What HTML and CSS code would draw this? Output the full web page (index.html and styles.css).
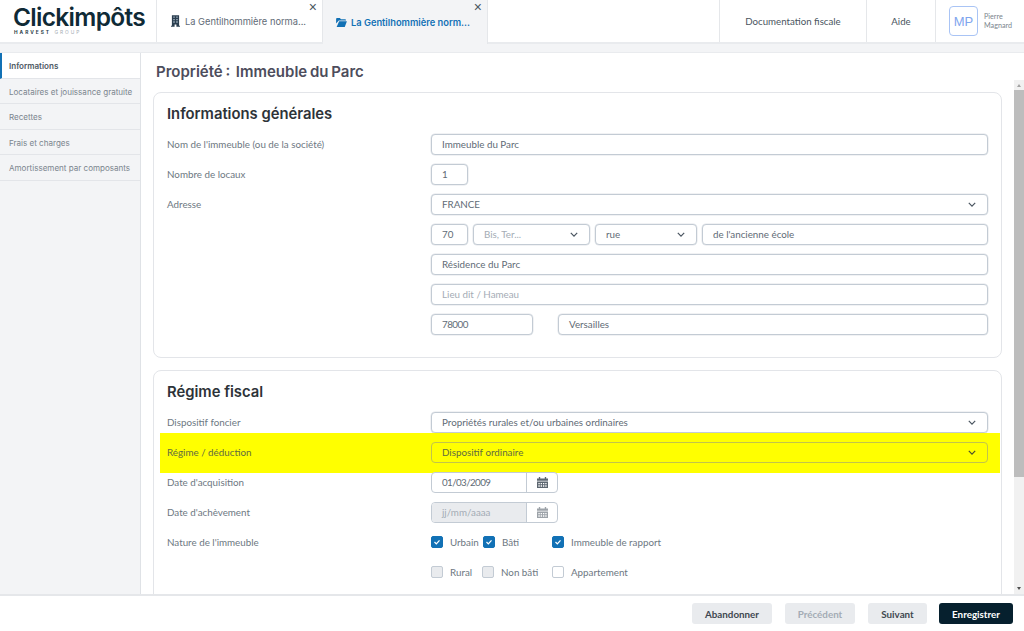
FILE: index.html
```html
<!DOCTYPE html>
<html lang="fr">
<head>
<meta charset="utf-8">
<title>Clickimpôts</title>
<link rel="stylesheet" href="styles.css">
</head>
<body>
<div class="app">
  <header class="topbar">
    <div class="logo">
      <div class="logo-name">Clickimpôts</div>
      <div class="logo-sub"><span class="logo-dark">HARVEST</span> GROUP</div>
    </div>
    <div class="tab">
      <svg class="tab-icon" viewBox="0 0 10 13"><path fill="#2b3f50" d="M1 0h8v11.800h1V13H6V10.500H4V13H0v-1.200h1z"/><path fill="#9fb0bd" d="M2.500 1.500h1.700V3H2.500zM5.800 1.500h1.700V3H5.800zM2.500 4.200h1.700v1.500H2.500zM5.800 4.200h1.700v1.500H5.800zM2.500 6.900h1.700v1.500H2.500zM5.800 6.900h1.700v1.500H5.800z"/></svg>
      <span class="tab-text">La Gentilhommière norma...</span>
      <span class="tab-close">×</span>
    </div>
    <div class="tab tab-active">
      <svg class="tab-icon-folder" viewBox="0 0 12 10"><path fill="#1271b5" d="M0 1.200C0 .5.5 0 1.200 0h3l1.200 1.300h4.400c.7 0 1.200.5 1.200 1.200v.4H3L0 6z"/><path fill="#1271b5" d="M3.400 3.600H12L9.600 10H.6z"/></svg>
      <span class="tab-text">La Gentilhommière norm...</span>
      <span class="tab-close">×</span>
    </div>
    <div class="spacer"></div>
    <div class="nav-link nav-doc">Documentation fiscale</div>
    <div class="nav-link nav-help">Aide</div>
    <div class="user">
      <div class="avatar">MP</div>
      <div class="user-name">Pierre<br>Magnard</div>
    </div>
  </header>
  <div class="strip"></div>
  <div class="middle">
    <nav class="sidebar">
      <div class="side-item side-active">Informations</div>
      <div class="side-item">Locataires et jouissance gratuite</div>
      <div class="side-item">Recettes</div>
      <div class="side-item">Frais et charges</div>
      <div class="side-item">Amortissement par composants</div>
    </nav>
    <main class="main">
      <h1 class="page-title">Propriété :&nbsp; Immeuble du Parc</h1>
      <div class="scroll-row">
        <div class="content">
          <section class="card">
            <h2 class="card-title">Informations générales</h2>
            <div class="row"><div class="label">Nom de l'immeuble (ou de la société)</div><div class="fields"><div class="input grow">Immeuble du Parc</div></div></div>
            <div class="row"><div class="label">Nombre de locaux</div><div class="fields"><div class="input w-num">1</div></div></div>
            <div class="row"><div class="label">Adresse</div><div class="fields"><div class="input select grow">FRANCE<svg class="chev" viewBox="0 0 10 6"><path d="M1 1l4 4 4-4"/></svg></div></div></div>
            <div class="row"><div class="label"></div><div class="fields gap5">
              <div class="input w-num">70</div>
              <div class="input select w-bis placeholder">Bis, Ter...<svg class="chev" viewBox="0 0 10 6"><path d="M1 1l4 4 4-4"/></svg></div>
              <div class="input select w-rue">rue<svg class="chev" viewBox="0 0 10 6"><path d="M1 1l4 4 4-4"/></svg></div>
              <div class="input grow">de l'ancienne école</div>
            </div></div>
            <div class="row"><div class="label"></div><div class="fields"><div class="input grow">Résidence du Parc</div></div></div>
            <div class="row"><div class="label"></div><div class="fields"><div class="input grow placeholder">Lieu dit / Hameau</div></div></div>
            <div class="row"><div class="label"></div><div class="fields gap25"><div class="input w-zip">78000</div><div class="input grow">Versailles</div></div></div>
          </section>
          <section class="card card-fiscal">
            <h2 class="card-title">Régime fiscal</h2>
            <div class="row"><div class="label">Dispositif foncier</div><div class="fields"><div class="input select grow">Propriétés rurales et/ou urbaines ordinaires<svg class="chev" viewBox="0 0 10 6"><path d="M1 1l4 4 4-4"/></svg></div></div></div>
            <div class="row row-hl"><div class="label">Régime / déduction</div><div class="fields"><div class="input select grow">Dispositif ordinaire<svg class="chev" viewBox="0 0 10 6"><path d="M1 1l4 4 4-4"/></svg></div></div></div>
            <div class="row"><div class="label">Date d'acquisition</div><div class="fields"><div class="date"><div class="date-value">01/03/2009</div><div class="date-btn"><svg class="cal" viewBox="0 0 12 12"><path fill="#5c6670" d="M2 0h1.500v1.500h5V0H10v1.500h2V4H0V1.500h2zM0 5h12v7H0z"/><path fill="#fff" d="M1.500 6.500h1.500V8H1.500zM4 6.500h1.500V8H4zM6.500 6.500H8V8H6.500zM9 6.500h1.500V8H9zM1.500 9h1.500v1.500H1.500zM4 9h1.500v1.500H4zM6.500 9H8v1.500H6.500zM9 9h1.500v1.500H9z"/></svg></div></div></div></div>
            <div class="row"><div class="label">Date d'achèvement</div><div class="fields"><div class="date"><div class="date-value date-disabled">jj/mm/aaaa</div><div class="date-btn"><svg class="cal cal-off" viewBox="0 0 12 12"><path fill="#5c6670" d="M2 0h1.500v1.500h5V0H10v1.500h2V4H0V1.500h2zM0 5h12v7H0z"/><path fill="#fff" d="M1.500 6.500h1.500V8H1.500zM4 6.500h1.500V8H4zM6.500 6.500H8V8H6.500zM9 6.500h1.500V8H9zM1.500 9h1.500v1.500H1.500zM4 9h1.500v1.500H4zM6.500 9H8v1.500H6.500zM9 9h1.500v1.500H9z"/></svg></div></div></div></div>
            <div class="row"><div class="label">Nature de l'immeuble</div><div class="fields checks">
              <span class="check check-on"><svg viewBox="0 0 12 12"><path d="M3 6l2.200 2.200L9 4"/></svg></span><span class="check-label cl-urbain">Urbain</span>
              <span class="check check-on"><svg viewBox="0 0 12 12"><path d="M3 6l2.200 2.200L9 4"/></svg></span><span class="check-label cl-bati">Bâti</span>
              <span class="check check-on"><svg viewBox="0 0 12 12"><path d="M3 6l2.200 2.200L9 4"/></svg></span><span class="check-label">Immeuble de rapport</span>
            </div></div>
            <div class="row"><div class="label"></div><div class="fields checks">
              <span class="check check-off"></span><span class="check-label cl-rural">Rural</span>
              <span class="check check-off"></span><span class="check-label cl-nonbati">Non bâti</span>
              <span class="check"></span><span class="check-label">Appartement</span>
            </div></div>
          </section>
        </div>
        <div class="scrollbar">
          <span class="sb-arrow sb-up"></span>
          <div class="sb-thumb"></div>
          <span class="sb-arrow sb-down"></span>
        </div>
      </div>
    </main>
  </div>
  <footer class="footer">
    <button class="btn btn-quit">Abandonner</button>
    <button class="btn btn-disabled">Précédent</button>
    <button class="btn btn-next">Suivant</button>
    <button class="btn btn-primary">Enregistrer</button>
  </footer>
</div>
</body>
</html>
```
FILE: styles.css
```css
* { box-sizing: border-box; }
html, body { margin: 0; padding: 0; height: 100%; overflow: hidden; }
body { font-family: Lato, "Open Sans", sans-serif; color: #5f6b76; background: #fff; }
.app { width: 1024px; height: 631px; display: flex; flex-direction: column; }

.topbar { height: 44px; display: flex; align-items: stretch; background: #fff; border-bottom: 2px solid #e9ebee; flex: none; }
.logo { width: 157px; padding: 5px 0 0 13px; border-right: 1px solid #e5e7ea; }
.logo-name { font-family: Inter, sans-serif; font-size: 24.500px; font-weight: 600; letter-spacing: -0.7px; line-height: 25px; color: #0f2a36; }
.logo-sub { font-family: Inter, sans-serif; font-size: 4.800px; letter-spacing: 2px; line-height: 5px; color: #a4adb4; margin-left: 1px; white-space: nowrap; }
.logo-dark { color: #2c3e48; font-weight: 700; }
.tab { width: 166px; position: relative; display: flex; align-items: center; padding: 0 0 0 14px; font-family: Inter, sans-serif; font-size: 9.300px; color: #5f6b76; border-right: 1px solid #e5e7ea; }
.tab-icon { width: 9px; height: 12px; margin-right: 5px; flex: none; }
.tab-icon-folder { width: 11px; height: 9px; margin-right: 4px; flex: none; }
.tab-active { background: #f3f4f6; color: #1271b5; font-weight: 600; margin-bottom: -2px; padding-left: 13px; width: 165px; }
.tab-text { white-space: nowrap; }
.tab-close { position: absolute; top: 0; right: 5px; font-size: 14px; line-height: 14px; color: #4c5660; font-family: "Liberation Sans", sans-serif; font-weight: 400; }
.spacer { flex: 1; }
.nav-link { display: flex; align-items: center; justify-content: center; font-size: 9.700px; color: #4a5560; border-left: 1px solid #e5e7ea; }
.nav-doc { width: 147px; }
.nav-help { width: 69px; }
.user { width: 89px; display: flex; align-items: center; padding-left: 13px; border-left: 1px solid #e5e7ea; }
.avatar { width: 29px; height: 30px; border: 1px solid #a9c4f5; border-radius: 4px; color: #7fa6ee; font-family: "Liberation Sans", sans-serif; font-size: 13px; display: flex; align-items: center; justify-content: center; margin-right: 6px; flex: none; }
.user-name { font-size: 7.200px; line-height: 9px; color: #7b858e; }

.strip { height: 9px; flex: none; background: #f3f4f6; border-bottom: 1px solid #e9ebee; }

.middle { flex: 1; min-height: 0; display: flex; }
.sidebar { width: 141px; flex: none; background: #f3f4f6; border-right: 1px solid #dfe2e6; }
.side-item { height: 25.500px; padding: 2px 0 0 9px; display: flex; align-items: center; font-family: Inter, sans-serif; font-size: 8.050px; color: #7b858e; border-bottom: 1px solid #e3e5e9; white-space: nowrap; }
.side-active { background: #fff; color: #4d5963; font-weight: 600; border-left: 2px solid #1271b5; padding-left: 7px; }

.main { flex: 1; min-width: 0; display: flex; flex-direction: column; }
.page-title { margin: 0; height: 27px; padding: 10px 0 0 15px; flex: none; font-family: Inter, sans-serif; font-size: 15px; font-weight: 600; word-spacing: -1px; line-height: 18px; color: #4d4d5c; }
.scroll-row { flex: 1; min-height: 0; display: flex; }
.content { flex: 1; min-width: 0; overflow: hidden; padding: 12px 12px 0 12px; }
.card { border: 1px solid #e3e5e9; border-radius: 8px; padding: 0 13px 18px 13px; background: #fff; }
.card-fiscal { margin-top: 12px; }
.card-title { margin: 0; height: 36px; padding-top: 11px; font-family: Inter, sans-serif; font-size: 14.800px; font-weight: 600; line-height: 20px; color: #2d3338; }
.row { height: 30px; display: flex; align-items: center; padding-top: 1px; }
.label { width: 264px; flex: none; font-size: 9.800px; padding-bottom: 2px; color: #6d7882; }
.fields { flex: 1; min-width: 0; display: flex; align-items: center; }
.gap5 { gap: 5px; }
.gap25 { gap: 25px; }
.input { height: 21px; border: 1px solid #c3cbd4; border-radius: 4px; padding: 0 11px 2px 10px; font-size: 9.800px; color: #5f6b76; display: flex; align-items: center; background: #fff; white-space: nowrap; box-shadow: 0 0 0 .5px #e3e6ea; }
.grow { flex: 1; min-width: 0; }
.w-num { width: 37px; flex: none; }
.w-bis { width: 117px; flex: none; }
.w-rue { width: 102px; flex: none; }
.w-zip { width: 102px; flex: none; letter-spacing: -.5px; }
.placeholder { color: #a4acb5; }
.select { justify-content: space-between; }
.chev { width: 8px; height: 5px; flex: none; margin-top: 2px; fill: none; stroke: #4a5560; stroke-width: 1.500; }
.row-hl { background: #ffff00; height: 40px; margin: -4px -12px -6px -7px; padding: 0 12px 1px 7px; position: relative; }
.row-hl .label { color: #5f6b40; }
.row-hl .input { background: transparent; border-color: #c2c44a; box-shadow: none; color: #5f6b40; }
.row-hl .chev { stroke: #4a5030; }
.row-hl + .row { position: relative; }
.date { width: 127px; height: 21px; display: flex; border: 1px solid #c3cbd4; border-radius: 4px; overflow: hidden; background: #fff; }
.date-value { flex: 1; padding: 0 0 2px 10px; font-size: 9.800px; letter-spacing: -.6px; color: #5f6b76; display: flex; align-items: center; border-right: 1px solid #c3cbd4; }
.date-disabled { background: #e9ebee; color: #a4acb5; letter-spacing: 0; }
.date-btn { width: 30px; display: flex; align-items: center; justify-content: center; flex: none; }
.cal { width: 11px; height: 11px; }
.cal-off { opacity: .6; }
.checks { font-size: 9.800px; color: #6d7882; }
.check { width: 12px; height: 12px; margin-bottom: 1px; border-radius: 2px; border: 1px solid #c3cbd4; background: #fff; flex: none; display: inline-flex; }
.check svg { width: 10px; height: 10px; fill: none; stroke: #fff; stroke-width: 1.500; }
.check-on { background: #1271b5; border-color: #1271b5; }
.check-off { background: #e9ebee; }
.check-label { margin-left: 7px; padding-bottom: 2px; white-space: nowrap; }
.cl-urbain { width: 28px; margin-right: 5px; }
.cl-bati { width: 50px; }
.cl-rural { width: 23px; margin-right: 9px; }
.cl-nonbati { width: 41px; margin-right: 10px; }

.scrollbar { width: 10px; height: 514px; flex: none; background: #f1f1f1; display: flex; flex-direction: column; align-items: center; }
.sb-arrow { width: 0; height: 0; border-left: 2.500px solid transparent; border-right: 2.500px solid transparent; flex: none; }
.sb-up { border-bottom: 3px solid #a3a3a3; margin: 4px 0 3px; }
.sb-down { border-top: 3px solid #505050; margin: auto 0 4px; }
.sb-thumb { width: 100%; height: 387px; flex: none; background: #bdbdbd; }

.footer { height: 37px; flex: none; border-top: 2px solid #e5e7ea; display: flex; align-items: center; justify-content: flex-end; padding-right: 11px; background: #fff; }
.btn { height: 21px; border: none; border-radius: 3px; background: #e9ebee; color: #3f4850; font-family: Lato, sans-serif; font-weight: 700; font-size: 9.800px; padding: 0; margin-left: 13px; }
.btn-quit { width: 80px; }
.btn-disabled { width: 70px; color: #a4acb5; }
.btn-next { width: 59px; }
.btn-primary { width: 74px; margin-left: 12px; background: #06202e; color: #fff; }
```
